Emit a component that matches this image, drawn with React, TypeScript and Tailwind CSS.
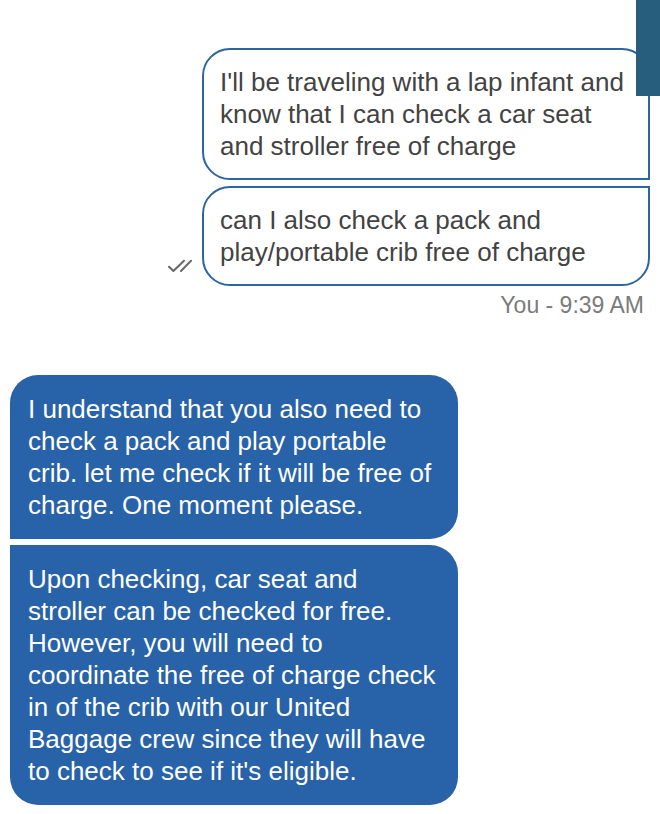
import React from "react";

const text = "text-[26px] leading-8";
const mine = `${text} w-[448px] border-2 border-[#2d65a3] bg-white px-4 py-4 text-[#434343]`;
const theirs = `${text} w-[448px] bg-[#2862a8] p-[18px] text-white`;

function ReadReceipt() {
  return (
    <svg role="img" aria-label="Read" className="mr-[10px] mb-3 h-4 w-6" viewBox="0 0 24 16" fill="none" stroke="#686868" strokeWidth="2" strokeLinecap="round" strokeLinejoin="round">
      <path d="M1 8.8 5.4 13 16 2.8M13 13 23 2.8" />
    </svg>
  );
}

export default function App() {
  return (
    <div className="relative bg-white font-['Liberation_Sans',Arial,sans-serif]">
      <main className="flex flex-col px-[10px] pt-12 pb-[9px]">
        <section className="flex flex-col items-end gap-[6px]">
          <p className={`${mine} rounded-[28px] rounded-br-none`}>
            I'll be traveling with a lap infant and know that I can check a car seat and stroller free of charge
          </p>
          <div className="flex items-end">
            <ReadReceipt />
            <p className={`${mine} rounded-[28px] rounded-tr-none`}>
              can I also check a pack and play/portable crib free of charge
            </p>
          </div>
          <p className="pr-[6px] text-[23px] leading-[26px] text-[#7b7b7b]">You - 9:39 AM</p>
        </section>
        <section className="mt-[57px] flex flex-col items-start gap-[6px]">
          <p className={`${theirs} rounded-[28px] rounded-bl-none`}>
            I understand that you also need to check a pack and play portable crib. let me check if it will be free of charge. One moment please.
          </p>
          <p className={`${theirs} rounded-[28px] rounded-tl-none`}>
            Upon checking, car seat and stroller can be checked for free. However, you will need to coordinate the free of charge check in of the crib with our United Baggage crew since they will have to check to see if it's eligible.
          </p>
        </section>
      </main>
      <div className="absolute top-0 right-0 h-24 w-6 bg-[#285e7d]" />
    </div>
  );
}
